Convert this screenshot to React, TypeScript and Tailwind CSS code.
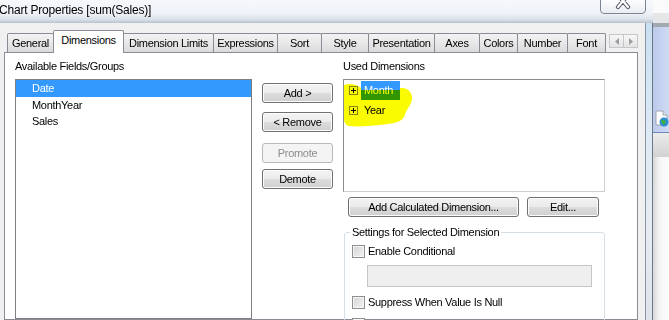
import React from 'react';

const tabs: { label: string; cls: string; selected?: boolean }[] = [
  { label: 'General', cls: 'w-[47px]' },
  { label: 'Dimensions', cls: 'w-[71px]', selected: true },
  { label: 'Dimension Limits', cls: 'w-[91px]' },
  { label: 'Expressions', cls: 'w-[65px]' },
  { label: 'Sort', cls: 'w-[45px]' },
  { label: 'Style', cls: 'w-[48px]' },
  { label: 'Presentation', cls: 'w-[67px]' },
  { label: 'Axes', cls: 'w-[46px]' },
  { label: 'Colors', cls: 'w-[39px]' },
  { label: 'Number', cls: 'w-[51px]' },
  { label: 'Font', cls: 'w-[39px]' },
];

function Btn({ children, cls, disabled }: { children: React.ReactNode; cls: string; disabled?: boolean }) {
  return (
    <div
      className={`${cls} h-[20px] flex items-center justify-center rounded-[3px] border text-[11px] leading-none ${
        disabled
          ? 'border-[#b5b9bc] text-[#8c8c8c] bg-[#f4f4f4]'
          : 'border-[#707070] text-black bg-[linear-gradient(#f3f3f3_0%,#ebebeb_50%,#dddddd_50%,#cfcfcf_100%)] shadow-[inset_0_0_0_1px_#fcfcfc]'
      }`}
    >
      {children}
    </div>
  );
}

function CheckRow({ label, cls }: { label: string; cls: string }) {
  return (
    <div className={`${cls} ml-[7px] flex items-center gap-[3px] h-[13px]`}>
      <div className="w-[13px] h-[13px] border border-[#8e8f8f] bg-[linear-gradient(135deg,#d4d4d4,#f4f4f4)] shadow-[inset_0_0_0_1px_#f6f6f6]" />
      <span className="text-[11px] leading-none">{label}</span>
    </div>
  );
}

function PlusIcon() {
  return (
    <svg width="9" height="9" viewBox="0 0 9 9" className="shrink-0">
      <rect x="0.5" y="0.5" width="8" height="8" fill="#ffffff" stroke="#8a8a8a" />
      <path d="M2 4.5h5M4.5 2v5" stroke="#000" strokeWidth="1" />
    </svg>
  );
}

export default function App() {
  return (
    <div className="w-[669px] h-[320px] overflow-hidden flex bg-white text-black font-['Liberation_Sans',Arial,sans-serif] tracking-[-0.3px]">
      {/* Dialog */}
      <div className="w-[653px] shrink-0 flex flex-col">
        {/* Title bar */}
        <div className="h-[23px] shrink-0 flex items-center bg-[linear-gradient(#f6f8fb_0%,#eef2f7_60%,#d9e0e8_85%,#b9c2cc_100%)]">
          <span className="-ml-[1px] text-[12px] leading-none tracking-[-0.2px] -mt-[3px]">Chart Properties [sum(Sales)]</span>
          <div className="self-start ml-auto mr-[7px] -mt-[3px] w-[46px] h-[17px] rounded-b-[4px] border border-[#7d8794] bg-[linear-gradient(#ffffff,#e9edf2)] flex justify-center overflow-hidden">
            <svg width="16" height="13" viewBox="0 0 16 13">
              <path d="M3 -3 L13 9 M13 -3 L3 9" stroke="#4d5661" strokeWidth="4.2" strokeLinecap="round" />
              <path d="M3 -3 L13 9 M13 -3 L3 9" stroke="#ffffff" strokeWidth="2.2" strokeLinecap="round" />
            </svg>
          </div>
        </div>

        <div className="flex flex-1 min-h-0">
          {/* Client */}
          <div className="w-[645px] shrink-0 bg-[#f0f0f0] pl-[4px] pt-[7px] flex flex-col">
            {/* Tab row */}
            <div className="flex items-end h-[22px] w-[634px] pl-[3px] shrink-0">
              {tabs.map((t) =>
                t.selected ? (
                  <div
                    key={t.label}
                    className={`${t.cls} h-[23px] -mb-px -ml-px relative z-10 bg-white border border-b-0 border-[#898c95] rounded-t-[2px] flex justify-center pt-[4px] text-[11px] leading-none`}
                  >
                    {t.label}
                  </div>
                ) : (
                  <div
                    key={t.label}
                    className={`${t.cls} h-[19px] -ml-px first:ml-0 border border-b-0 border-[#898c95] rounded-t-[2px] bg-[linear-gradient(#f3f3f3,#e8e8e8_50%,#dadada)] flex justify-center pt-[4px] text-[11px] leading-none`}
                  >
                    {t.label}
                  </div>
                )
              )}
              <div className="ml-auto mb-[4px] flex">
                <div className="w-[15px] h-[14px] border border-[#c3c6ca] bg-[linear-gradient(#f7f7f7,#e3e3e3)] flex items-center justify-center">
                  <svg width="4" height="7" viewBox="0 0 4 7"><path d="M4 0 L0 3.5 L4 7 Z" fill="#9c9c9c" /></svg>
                </div>
                <div className="w-[15px] h-[14px] -ml-px border border-[#c3c6ca] bg-[linear-gradient(#f7f7f7,#e3e3e3)] flex items-center justify-center">
                  <svg width="4" height="7" viewBox="0 0 4 7"><path d="M0 0 L4 3.5 L0 7 Z" fill="#9c9c9c" /></svg>
                </div>
              </div>
            </div>

            {/* Panel */}
            <div className="w-[634px] h-[268px] shrink-0 border border-[#898c95] bg-white pt-[6px] pl-[10px] flex gap-[10px] text-[11px]">
              {/* Left column */}
              <div className="w-[237px] flex flex-col">
                <div className="h-[14px] leading-[14px]">Available Fields/Groups</div>
                <div className="mt-[6px] h-[250px] border border-[#7f7f7f] flex flex-col">
                  <div className="h-[17px] shrink-0 bg-[#3399ff] text-white pl-[16px] flex items-center">Date</div>
                  <div className="h-[17px] shrink-0 pl-[16px] flex items-center">MonthYear</div>
                  <div className="h-[15px] shrink-0 pl-[16px] flex items-center">Sales</div>
                </div>
              </div>

              {/* Buttons column */}
              <div className="w-[71px] flex flex-col">
                <Btn cls="mt-[24px] w-[71px]">Add &gt;</Btn>
                <Btn cls="mt-[9px] w-[71px]">&lt; Remove</Btn>
                <Btn cls="mt-[11px] w-[71px]" disabled>Promote</Btn>
                <Btn cls="mt-[6px] w-[71px]">Demote</Btn>
              </div>

              {/* Right column */}
              <div className="w-[262px] flex flex-col">
                <div className="h-[14px] leading-[14px]">Used Dimensions</div>
                <div className="mt-[6px] h-[113px] shrink-0 relative border border-[#8c8c8c] border-r-[#cfcfcf] border-b-[#cfcfcf] pt-[1px] flex flex-col">
                  <div className="h-[19px] shrink-0 pl-[5px] flex items-center gap-[3px]">
                    <PlusIcon />
                    <span className="h-[19px] w-[39px] px-[3px] bg-[#3399ff] text-white flex items-center">Month</span>
                  </div>
                  <div className="h-[21px] shrink-0 pl-[5px] flex items-center gap-[3px]">
                    <PlusIcon />
                    <span className="px-[3px]">Year</span>
                  </div>
                  <svg
                    className="absolute left-0 top-0 mix-blend-multiply pointer-events-none"
                    width="80"
                    height="60"
                    viewBox="0 0 80 60"
                  >
                    <path
                      d="M0,5 C6,3 12,4 17,8 L17,10 L56,10 L56,8 C64,7 69,13 68,20 C66,27 62,30 61,35 C59,41 52,43 44,44 C28,46 14,47 5,46 C1,45 0,42 0,38 Z"
                      fill="#fafa00"
                    />
                  </svg>
                </div>
                <div className="mt-[5px] flex shrink-0">
                  <Btn cls="ml-[5px] w-[171px]">Add Calculated Dimension...</Btn>
                  <Btn cls="ml-[8px] w-[72px]">Edit...</Btn>
                </div>
                <fieldset className="mt-[8px] ml-[1px] w-[261px] h-[120px] shrink-0 border border-[#d5dfe5] rounded-[3px]">
                  <legend className="ml-[5px] px-[2px] h-[14px] leading-[14px]">Settings for Selected Dimension</legend>
                  <CheckRow cls="mt-[6px]" label="Enable Conditional" />
                  <div className="mt-[7px] ml-[22px] w-[225px] h-[22px] border border-[#c6c6c6] bg-[#efefef]" />
                  <CheckRow cls="mt-[9px]" label="Suppress When Value Is Null" />
                  <CheckRow cls="mt-[9px]" label="Show All Values" />
                </fieldset>
              </div>
            </div>
          </div>

          {/* Right window frame */}
          <div className="w-[8px] shrink-0 flex">
            <div className="w-px bg-[#8795a5]" />
            <div className="w-[6px] bg-[linear-gradient(#c9e0f2,#dfeaf4_40%,#e6ecf1_70%,#dde3e8)]" />
            <div className="w-px bg-[#6c7886]" />
          </div>
        </div>
      </div>

      {/* Background application */}
      <div className="w-[16px] shrink-0 flex flex-col">
        <div className="h-[13px] bg-[#fafafa]" />
        <div className="h-[10px] bg-[#e4e6e8]" />
        <div className="h-[4px] bg-[#a3a9b0]" />
        <div className="h-[78px] bg-[linear-gradient(90deg,#bccaeb,#cfdaf3)]" />
        <div className="h-[27px] bg-[linear-gradient(90deg,#bccaeb,#cfdaf3)] flex items-center pl-[2px]">
          <svg width="14" height="17" viewBox="0 0 14 17">
            <path d="M1 1 H8 L12 5 V15 H1 Z" fill="#ffffff" stroke="#9aa3ad" strokeWidth="1" />
            <path d="M8 1 V5 H12" fill="#e8ecf0" stroke="#9aa3ad" strokeWidth="1" />
            <circle cx="9" cy="12" r="4.5" fill="#2f8fd0" />
            <path d="M6.5 10 C8 9 9 11 10.5 10.5 C11.5 12 10 14 8.5 15 C7.5 13.5 6 12.5 6.5 10 Z" fill="#3fae3a" />
          </svg>
        </div>
        <div className="h-px bg-[#6f86bd]" />
        <div className="h-[24px] bg-[linear-gradient(#ececec,#d2d2d2)]" />
        <div className="flex-1 bg-[linear-gradient(90deg,#d8d8d8,#f4f4f4_40%,#ffffff)]" />
      </div>
    </div>
  );
}
